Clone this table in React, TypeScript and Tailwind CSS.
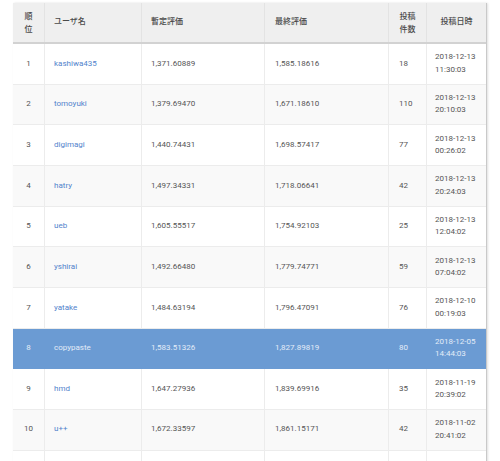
import React from 'react';

type Row = {
  rank: number;
  user: string;
  provisional: string;
  final: string;
  count: number;
  date: string;
  time: string;
};

const rows: Row[] = [
  { rank: 1, user: 'kashiwa435', provisional: '1,371.60889', final: '1,585.18616', count: 18, date: '2018-12-13', time: '11:30:03' },
  { rank: 2, user: 'tomoyuki', provisional: '1,379.69470', final: '1,671.18610', count: 110, date: '2018-12-13', time: '20:10:03' },
  { rank: 3, user: 'digimagi', provisional: '1,440.74431', final: '1,698.57417', count: 77, date: '2018-12-13', time: '00:26:02' },
  { rank: 4, user: 'hatry', provisional: '1,497.34331', final: '1,718.06641', count: 42, date: '2018-12-13', time: '20:24:03' },
  { rank: 5, user: 'ueb', provisional: '1,605.55517', final: '1,754.92103', count: 25, date: '2018-12-13', time: '12:04:02' },
  { rank: 6, user: 'yshirai', provisional: '1,492.66480', final: '1,779.74771', count: 59, date: '2018-12-13', time: '07:04:02' },
  { rank: 7, user: 'yatake', provisional: '1,484.63194', final: '1,796.47091', count: 76, date: '2018-12-10', time: '00:19:03' },
  { rank: 8, user: 'copypaste', provisional: '1,583.51326', final: '1,827.89819', count: 80, date: '2018-12-05', time: '14:44:03' },
  { rank: 9, user: 'hmd', provisional: '1,647.27936', final: '1,839.69916', count: 35, date: '2018-11-19', time: '20:39:02' },
  { rank: 10, user: 'u++', provisional: '1,672.33597', final: '1,861.15171', count: 42, date: '2018-11-02', time: '20:41:02' },
];

const cols = 'grid grid-cols-[32px_97px_123px_124px_38px_59px]';
const font = { fontFamily: 'Roboto, "Noto Sans CJK JP", sans-serif' };

export default function App() {
  return (
    <div className="w-[500px] h-[461px] overflow-hidden bg-white" style={font}>
      <div className="ml-[13px] mt-[3px] w-[474px] border-r border-[#c9c9c9] shadow-[1px_0_2px_rgba(0,0,0,0.12)] text-[8px] leading-[12.5px] text-[#555]">
        {/* header */}
        <div className={`${cols} h-[41px] bg-[#efefef] border-b-2 border-[#d2d2d2] font-medium text-[#4a4a4a]`}>
          <div className="flex items-center justify-center text-center border-r border-[#e3e3e3] leading-[13px]">
            順<br />位
          </div>
          <div className="flex items-center pl-[9px] border-r border-[#e3e3e3]">ユーザ名</div>
          <div className="flex items-center pl-[9px] border-r border-[#e3e3e3]">暫定評価</div>
          <div className="flex items-center pl-[10px] border-r border-[#e3e3e3]">最終評価</div>
          <div className="flex items-center justify-center text-center border-r border-[#e3e3e3] leading-[13px]">
            投稿<br />件数
          </div>
          <div className="flex items-center justify-center">投稿日時</div>
        </div>

        {rows.map((r) => {
          const hi = r.rank === 8;
          const bg = hi ? 'bg-[#6b9bd3]' : r.rank % 2 === 0 ? 'bg-[#f9f9f9]' : 'bg-white';
          const line = hi ? 'border-[#6b9bd3]' : 'border-[#ececec]';
          const txt = hi ? 'text-[#e3ecf8]' : '';
          return (
            <div key={r.rank} className={`${cols} h-[40.67px] border-b ${line} ${bg} ${txt}`}>
              <div className={`flex items-center justify-center border-r ${line}`}>{r.rank}</div>
              <div className={`flex items-center pl-[9px] border-r ${line} ${hi ? '' : 'text-[#5283cc]'}`}>
                {r.user}
              </div>
              <div className={`flex items-center pl-[9px] border-r ${line}`}>{r.provisional}</div>
              <div className={`flex items-center pl-[10px] border-r ${line}`}>{r.final}</div>
              <div className={`flex items-center pl-[10px] border-r ${line}`}>{r.count}</div>
              <div className="flex flex-col justify-center pl-[8px]">
                <span>{r.date}</span>
                <span>{r.time}</span>
              </div>
            </div>
          );
        })}

        <div className={`${cols} h-[20px] bg-white`}>
          <div className="border-r border-[#ececec]" />
          <div className="border-r border-[#ececec]" />
          <div className="border-r border-[#ececec]" />
          <div className="border-r border-[#ececec]" />
          <div className="border-r border-[#ececec]" />
          <div />
        </div>
      </div>
    </div>
  );
}
